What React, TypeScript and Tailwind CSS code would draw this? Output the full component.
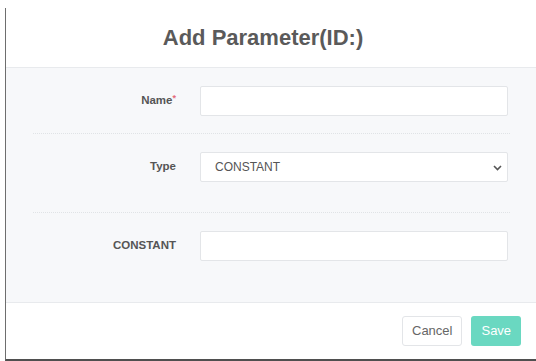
import React from "react";

const font = "font-['Liberation_Sans',_Arial,_sans-serif]";

function Row({
  label,
  required,
  children,
}: {
  label: string;
  required?: boolean;
  children: React.ReactNode;
}) {
  return (
    <div className="flex items-center">
      <label className="w-[143px] shrink-0 text-right text-[11.5px] font-bold text-[#555]">
        {label}
        {required && <span className="text-[#e46b7b] align-top text-[9px]">*</span>}
      </label>
      <div className="ml-[24px] w-[308px]">{children}</div>
    </div>
  );
}

export default function App() {
  return (
    <div className={`${font} w-[536px] h-[361px] bg-white pt-2 pl-[5px] overflow-hidden`}>
      <div className="h-[353px] w-[540px] flex flex-col border-l border-b-2 border-l-[#6e6e6e] border-b-[#4f4f4f] bg-white">
        {/* Header */}
        <div className="h-[60px] shrink-0 flex items-center justify-center border-b border-[#e8eaed] pr-[25px]">
          <h1 className="text-[22px] font-bold text-[#5a5a5a]">Add Parameter(ID:)</h1>
        </div>

        {/* Body */}
        <div className="h-[234px] shrink-0 bg-[#f7f8fa] pl-[27px] pt-[18px]">
          <div className="w-[477px]">
            <Row label="Name" required>
              <input className="block w-full h-[30px] bg-white border border-[#e3e5e8] rounded-[2px] outline-none" />
            </Row>
            <div className="mt-[17px] border-t border-dotted border-[#e0e3e6]" />
            <div className="mt-[18px]">
              <Row label="Type">
                <div className="relative">
                  <select className="block w-full h-[30px] appearance-none bg-white border border-[#e3e5e8] rounded-[2px] pl-[14px] text-[12px] text-[#555] outline-none">
                    <option>CONSTANT</option>
                  </select>
                  <svg
                    className="absolute right-[6px] top-[13px]"
                    width="9"
                    height="6"
                    viewBox="0 0 9 6"
                  >
                    <polyline points="1,1 4.5,4.5 8,1" fill="none" stroke="#555" strokeWidth="1.6" />
                  </svg>
                </div>
              </Row>
            </div>
            <div className="mt-[30px] border-t border-dotted border-[#e0e3e6]" />
            <div className="mt-[18px]">
              <Row label="CONSTANT">
                <input className="block w-full h-[30px] bg-white border border-[#e3e5e8] rounded-[2px] outline-none" />
              </Row>
            </div>
          </div>
        </div>

        {/* Footer */}
        <div className="flex-1 border-t border-[#e8eaed] flex items-center justify-start pl-[396px] gap-[9px]">
          <button className="h-[30px] px-[9px] bg-white border border-[#e3e5e8] rounded-[3px] text-[13px] text-[#666]">
            Cancel
          </button>
          <button className="h-[30px] px-[10px] bg-[#6ad8c1] rounded-[3px] text-[13px] text-white">
            Save
          </button>
        </div>
      </div>
    </div>
  );
}
